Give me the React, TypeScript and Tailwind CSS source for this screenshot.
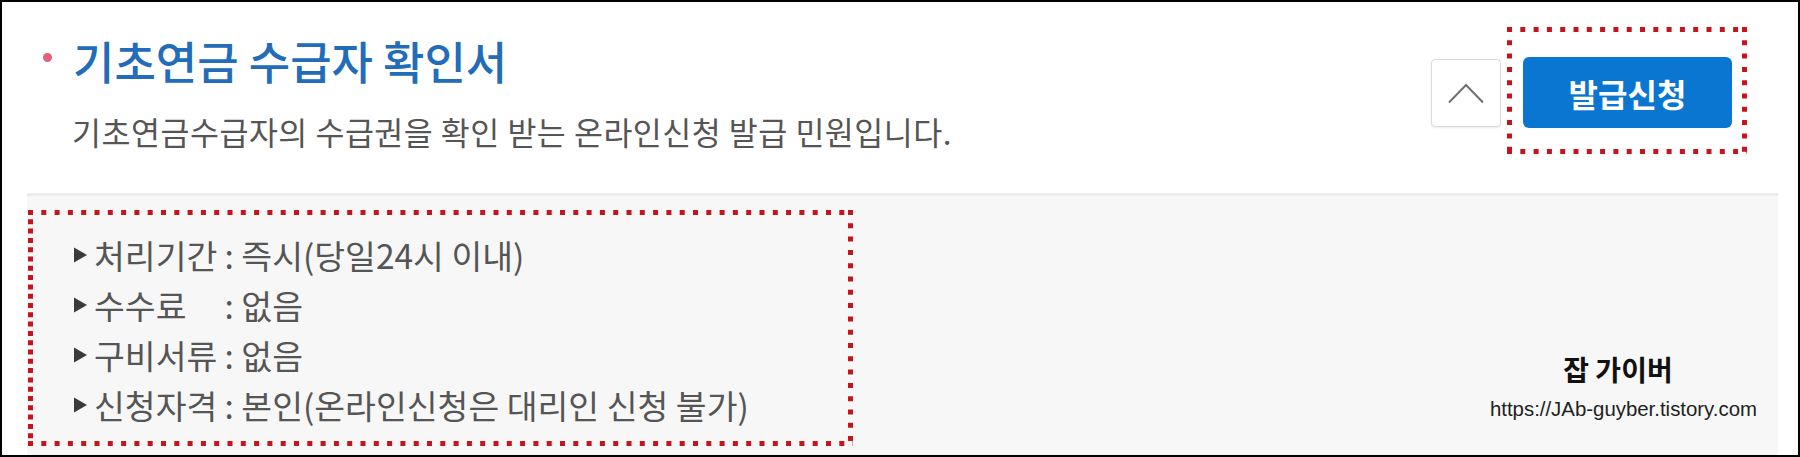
import React from "react";

const RED = "#c4141d";

function DottedBox({ w, h, leftPitch = 13.3 }: { w: number; h: number; leftPitch?: number }) {
  const d = 5;
  const gapH = 13.3 - d;
  const gapL = leftPitch - d;
  return (
    <svg width={w} height={h} viewBox={`0 0 ${w} ${h}`} className="block" style={{ filter: "blur(0.4px)" }}>
      <line x1={0} y1={2.5} x2={w} y2={2.5} stroke={RED} strokeWidth={5} strokeDasharray={`${d} ${gapH}`} />
      <line x1={0} y1={h - 2.5} x2={w} y2={h - 2.5} stroke={RED} strokeWidth={5} strokeDasharray={`${d} ${gapH}`} />
      <line x1={2.5} y1={0} x2={2.5} y2={h} stroke={RED} strokeWidth={5} strokeDasharray={`${d} ${gapL}`} />
      <line x1={w - 2.5} y1={0} x2={w - 2.5} y2={h} stroke={RED} strokeWidth={5} strokeDasharray={`${d} ${gapH}`} />
    </svg>
  );
}

function Tri() {
  return (
    <svg width="15" height="18" viewBox="0 0 15 18" className="shrink-0">
      <polygon points="1,1.5 14,9 1,16.5" fill="#3a3a3a" />
    </svg>
  );
}

const rows: { label: string; value: string }[] = [
  { label: "처리기간", value: "즉시(당일24시 이내)" },
  { label: "수수료", value: "없음" },
  { label: "구비서류", value: "없음" },
  { label: "신청자격", value: "본인(온라인신청은 대리인 신청 불가)" },
];

export default function App() {
  return (
    <div
      className="w-[1800px] h-[457px] border-2 border-black bg-white flex flex-col overflow-hidden"
      style={{ fontFamily: '"Noto Sans CJK KR", "Noto Sans", sans-serif' }}
    >
      {/* header */}
      <div className="h-[191px] flex shrink-0">
        <div className="flex-1 pt-[36px]">
          <div className="flex items-start">
            <div className="ml-[41px] mt-[15px] w-[9px] h-[9px] rounded-full bg-[#e2607c] shrink-0" />
            <h1 className="ml-[21px] text-[45px] leading-[46px] font-medium text-[#226cba]">
              기초연금 수급자 확인서
            </h1>
          </div>
          <p className="ml-[70px] mt-[27px] text-[31.5px] leading-[40px] tracking-[0.5px] text-[#555555]">
            기초연금수급자의 수급권을 확인 받는 온라인신청 발급 민원입니다.
          </p>
        </div>
        <div className="flex items-center gap-[22px] self-start mt-[55px] mr-[66px]">
          <button className="w-[70px] h-[68px] rounded-[4px] border border-[#dadada] bg-white flex items-center justify-center shadow-[0_1px_2px_rgba(0,0,0,0.08)]">
            <svg width="36" height="21" viewBox="0 0 36 21" className="mt-[2px]">
              <polyline points="1,19.5 18,2 35,19.5" fill="none" stroke="#707070" strokeWidth="2" />
            </svg>
          </button>
          <div className="relative">
            <button className="w-[209px] h-[71px] rounded-[6px] bg-[#0b76d1] text-white text-[32px] font-bold leading-none flex items-center justify-center">
              발급신청
            </button>
            <div className="absolute left-[-16px] top-[-30px]">
              <DottedBox w={240} h={127} />
            </div>
          </div>
        </div>
      </div>

      {/* gray panel */}
      <div className="flex-1 ml-[25px] mr-[20px] bg-[#f7f7f7] border-t-[3px] border-[#ececec] flex">
        <div className="relative ml-[1px] mt-[14px] w-[825px] h-[236px] pl-[45px] pt-[20px]">
          {rows.map((r) => (
            <div key={r.label} className="h-[50px] flex items-center text-[33.5px] leading-[50px] text-[#555555]">
              <Tri />
              <span className="ml-[6px] inline-block w-[123px] whitespace-nowrap">{r.label}</span>
              <span className="whitespace-nowrap">&nbsp;: {r.value}</span>
            </div>
          ))}
          <div className="absolute left-0 top-0">
            <DottedBox w={825} h={236} leftPitch={9.3} />
          </div>
        </div>
        <div className="ml-auto self-end mb-[34px] mr-[21px] flex flex-col items-center">
          <div className="mr-[11px] text-[28px] leading-[30px] font-bold text-[#111111]">잡 가이버</div>
          <div
            className="mt-[13px] text-[20.4px] leading-[24px] text-[#222222]"
            style={{ fontFamily: '"Liberation Sans", Arial, sans-serif' }}
          >
            https://JAb-guyber.tistory.com
          </div>
        </div>
      </div>
    </div>
  );
}
